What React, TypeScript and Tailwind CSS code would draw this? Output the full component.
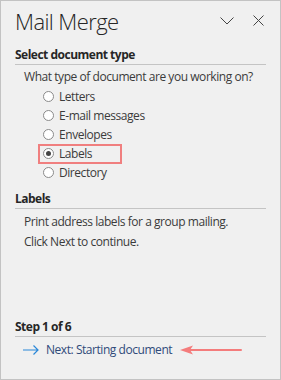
import React from "react";

const options = ["Letters", "E-mail messages", "Envelopes", "Labels", "Directory"];

function Radio({ checked }: { checked?: boolean }) {
  return (
    <span className="flex h-[11px] w-[11px] items-center justify-center rounded-full border border-[#8a8a8a] bg-white">
      {checked && <span className="h-[5px] w-[5px] rounded-full bg-[#444]" />}
    </span>
  );
}

function Heading({ children }: { children: React.ReactNode }) {
  return (
    <div className="mx-[14px] border-b border-[#c4c4c4] pb-[1px] text-[12px] font-bold leading-[16px] tracking-[-0.5px] text-[#262626]">
      {children}
    </div>
  );
}

export default function App() {
  return (
    <div
      className="flex h-[380px] w-[281px] flex-col border border-[#c3c3c3] bg-[#f0f0f0] text-[12px] tracking-[-0.45px] text-[#3b3b3b]"
      style={{ fontFamily: '"Open Sans", "Noto Sans", sans-serif' }}
    >
      <div className="flex items-start justify-between pl-[14px] pr-[16px] pt-[6px]">
        <h1 className="text-[22px] font-light leading-[28px] tracking-[-0.6px] text-[#262626]">Mail Merge</h1>
        <div className="flex items-center gap-[19px] pt-[8px]">
          <svg width="14" height="8" viewBox="0 0 14 8" fill="none">
            <path d="M0.5 0.5 L7 7 L13.5 0.5" stroke="#444" strokeWidth="1" />
          </svg>
          <svg width="11" height="11" viewBox="0 0 11 11" fill="none">
            <path d="M0.5 0.5 L10.5 10.5 M10.5 0.5 L0.5 10.5" stroke="#444" strokeWidth="1" />
          </svg>
        </div>
      </div>

      <div className="mt-[12px]">
        <Heading>Select document type</Heading>
        <p className="ml-[23px] mt-[3px] whitespace-nowrap leading-[17px]">What type of document are you working on?</p>
        <ul className="mt-[2px] flex flex-col">
          {options.map((o) => {
            const selected = o === "Labels";
            return (
              <li key={o} className="ml-[37px] flex h-[19px] items-center">
                <div
                  className={
                    selected
                      ? "flex h-[20px] w-[84px] items-center gap-[5px] border-2 border-[#f07f7f] pl-[3px]"
                      : "flex items-center gap-[5px] pl-[5px]"
                  }
                >
                  <Radio checked={selected} />
                  <span className="leading-[16px]">{o}</span>
                </div>
              </li>
            );
          })}
        </ul>
      </div>

      <div className="mt-[9px]">
        <Heading>Labels</Heading>
        <p className="ml-[23px] mt-[3px] whitespace-nowrap leading-[20px]">Print address labels for a group mailing.</p>
        <p className="ml-[23px] leading-[20px]">Click Next to continue.</p>
      </div>

      <div className="mb-[21px] mt-auto">
        <Heading>Step 1 of 6</Heading>
        <div className="mt-[5px] flex items-center pl-[22px]">
          <svg width="16" height="10" viewBox="0 0 16 10" fill="none">
            <path d="M0 5 H15 M10.5 0.5 L15 5 L10.5 9.5" stroke="#2b88d8" strokeWidth="1.2" />
          </svg>
          <span className="ml-[7px] whitespace-nowrap leading-[16px] text-[#2f4a7a]">Next: Starting document</span>
          <svg width="64" height="12" viewBox="0 0 64 12" className="ml-[7px]" fill="none">
            <path d="M10 6 H62" stroke="#f47c7c" strokeWidth="2" strokeLinecap="round" />
            <path d="M1 6 L14 1.5 L11 6 L14 10.5 Z" fill="#f47c7c" />
          </svg>
        </div>
      </div>
    </div>
  );
}
